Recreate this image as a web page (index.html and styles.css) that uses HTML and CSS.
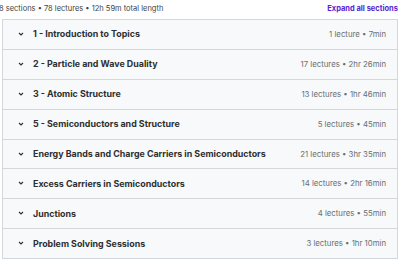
FILE: index.html
```html
<!DOCTYPE html>
<html lang="en">

<head>
    <meta charset="UTF-8">
    <title>Course content</title>
    <link rel="stylesheet" href="styles.css">
</head>

<body>

    <div class="content-header">
        <span class="summary">8 sections • 78 lectures • 12h 59m total length</span>
        <a class="expand" href="#">Expand all sections</a>
    </div>

    <div class="sections">
        <div class="section">
            <svg class="chevron" viewBox="0 0 8 8"><polyline points="2,3 4,5 6,3" /></svg>
            <span class="title">1 - Introduction to Topics</span>
            <span class="meta">1 lecture • 7min</span>
        </div>
        <div class="section">
            <svg class="chevron" viewBox="0 0 8 8"><polyline points="2,3 4,5 6,3" /></svg>
            <span class="title">2 - Particle and Wave Duality</span>
            <span class="meta">17 lectures • 2hr 26min</span>
        </div>
        <div class="section">
            <svg class="chevron" viewBox="0 0 8 8"><polyline points="2,3 4,5 6,3" /></svg>
            <span class="title">3 - Atomic Structure</span>
            <span class="meta">13 lectures • 1hr 46min</span>
        </div>
        <div class="section">
            <svg class="chevron" viewBox="0 0 8 8"><polyline points="2,3 4,5 6,3" /></svg>
            <span class="title">5 - Semiconductors and Structure</span>
            <span class="meta">5 lectures • 45min</span>
        </div>
        <div class="section">
            <svg class="chevron" viewBox="0 0 8 8"><polyline points="2,3 4,5 6,3" /></svg>
            <span class="title">Energy Bands and Charge Carriers in Semiconductors</span>
            <span class="meta">21 lectures • 3hr 35min</span>
        </div>
        <div class="section">
            <svg class="chevron" viewBox="0 0 8 8"><polyline points="2,3 4,5 6,3" /></svg>
            <span class="title">Excess Carriers in Semiconductors</span>
            <span class="meta">14 lectures • 2hr 16min</span>
        </div>
        <div class="section">
            <svg class="chevron" viewBox="0 0 8 8"><polyline points="2,3 4,5 6,3" /></svg>
            <span class="title">Junctions</span>
            <span class="meta">4 lectures • 55min</span>
        </div>
        <div class="section">
            <svg class="chevron" viewBox="0 0 8 8"><polyline points="2,3 4,5 6,3" /></svg>
            <span class="title">Problem Solving Sessions</span>
            <span class="meta">3 lectures • 1hr 10min</span>
        </div>
    </div>

</body>

</html>
```

FILE: styles.css
```css
body {
    margin: 0;
    padding: 0 2px;
    background-color: #ffffff;
    font-family: Inter, "Noto Sans", sans-serif;
    color: #2d2f31;
}

.content-header {
    display: flex;
    justify-content: space-between;
    align-items: center;
    height: 19px;
    margin-left: -3px;
    padding-bottom: 3px;
    box-sizing: border-box;
}

.summary {
    font-size: 7.5px;
    color: #3e4143;
}

.expand {
    font-size: 7.5px;
    font-weight: 700;
    color: #5624d0;
    text-decoration: none;
}

.sections {
    border: 1px solid #d1d7dc;
    border-bottom: none;
}

.section {
    display: flex;
    align-items: center;
    height: 29.9px;
    box-sizing: border-box;
    padding: 0 11px 1px 14px;
    background-color: #f7f9fa;
    border-bottom: 1px solid #d1d7dc;
}

.chevron {
    width: 8px;
    height: 8px;
    flex-shrink: 0;
    margin-right: 8px;
    fill: none;
    stroke: #2d2f31;
    stroke-width: 1.1;
}

.title {
    flex: 1;
    font-size: 8.9px;
    font-weight: 700;
    white-space: nowrap;
}

.meta {
    font-size: 7.8px;
    color: #6a6f73;
    white-space: nowrap;
}
```
